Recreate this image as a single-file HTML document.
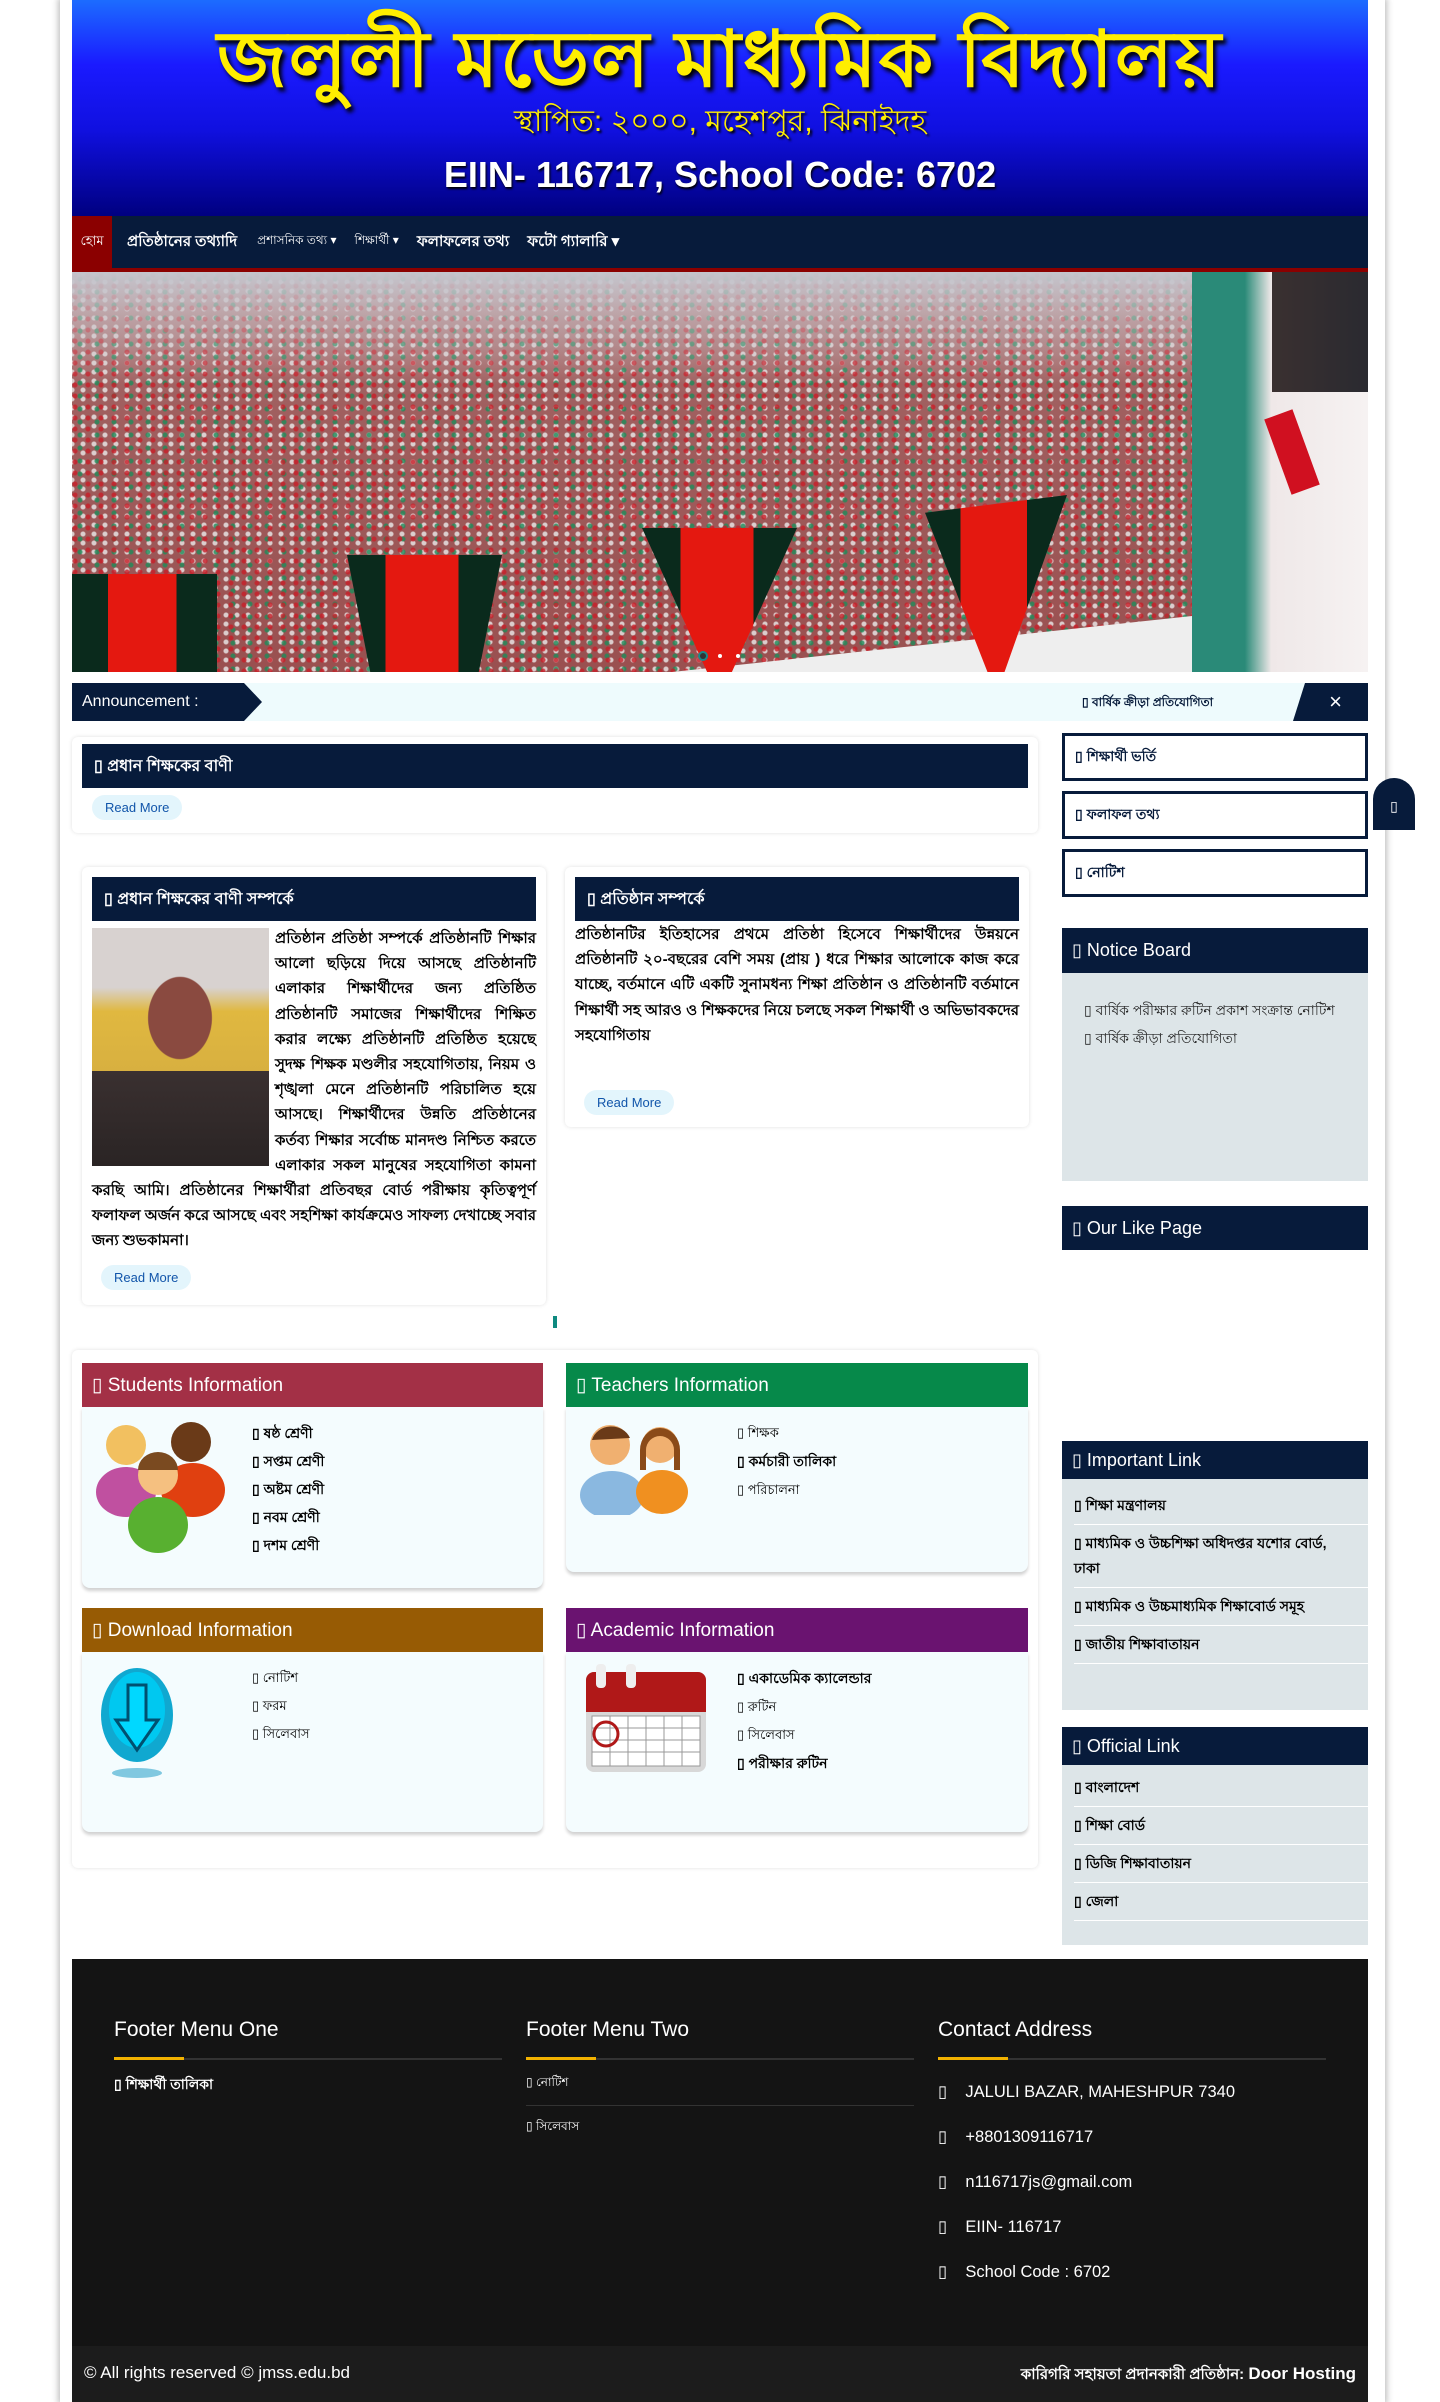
<!DOCTYPE html>
<html><head><meta charset="utf-8">
<style>
*{box-sizing:border-box;margin:0;padding:0}
body{width:1440px;height:2402px;background:#fff;font-family:"Liberation Sans",sans-serif;position:relative;overflow:hidden;color:#000}
.a{position:absolute}
.wrap{left:60px;top:0;width:1325px;height:2402px;box-shadow:0 0 6px 2px rgba(0,0,0,.25);background:#fff}
.navy{background:#071b3b;color:#fff}
.hd{font-size:16px;font-weight:bold;padding-left:12px;display:flex;align-items:center}
.rm{background:#e3f5fc;color:#1155aa;font-size:13px;border-radius:14px;padding:5px 13px;display:inline-block}
.card{background:#fff;border-radius:6px;box-shadow:0 0 4px rgba(0,0,0,.12)}
.sbtn{border:3px solid #071b3b;color:#071b3b;font-size:14px;font-weight:bold;padding-left:10px;display:flex;align-items:center}
.ih{color:#fff;font-size:19px;padding-left:10px;display:flex;align-items:center}
.ib{background:#f4fcfe;border-radius:0 0 8px 8px;box-shadow:0 3px 3px rgba(0,0,0,.18)}
.li{font-size:14px;line-height:28px}
.sl{background:#dde5e8}
.sl div{border-bottom:1px solid #fff;margin-left:12px;font-size:14px;padding:6px 0;line-height:25px}
.ft{color:#fff;font-size:21px}
.fu{height:2px;background:#333}
.fu i{display:block;width:70px;height:3px;background:#f2b200;margin-top:-1px}
.fc{color:#fff;font-size:16px}
.ban{background:linear-gradient(90deg,#0a2a1c 0,#0a2a1c 25%,#e41810 25%,#e41810 72%,#0a2a1c 72%)}
</style></head><body>
<div class="a wrap"></div>
<div class="a" style="left:72px;top:0;width:1296px;height:216px;background:linear-gradient(#1c6cff 0%,#1a1aff 30%,#1010e0 60%,#000080 100%);overflow:hidden">
 <div class="a" style="left:0;top:14px;width:1296px;text-align:center;color:#ffee00;font-size:78px;line-height:90px;font-weight:bold;text-shadow:3px 4px 4px #000;letter-spacing:2px">জলুলী মডেল মাধ্যমিক বিদ্যালয়</div>
 <div class="a" style="left:0;top:102px;width:1296px;text-align:center;color:#ffee00;font-size:30px;line-height:40px;text-shadow:2px 2px 2px #000">স্থাপিত: ২০০০, মহেশপুর, ঝিনাইদহ</div>
 <div class="a" style="left:0;top:153px;width:1296px;text-align:center;color:#fff;font-size:36px;line-height:44px;font-weight:bold;text-shadow:1px 2px 2px #000">EIIN- 116717, School Code: 6702</div>
</div>
<div class="a navy" style="left:72px;top:216px;width:1296px;height:52px;font-size:15px;font-weight:bold;display:flex;align-items:center">
 <div style="background:#8b0000;width:40px;height:52px;display:flex;align-items:center;justify-content:center;font-weight:normal;font-size:13px">হোম</div>
 <span style="margin-left:15px">প্রতিষ্ঠানের তথ্যাদি</span>
 <span style="margin-left:20px;font-weight:normal;font-size:12px">প্রশাসনিক তথ্য ▾</span>
 <span style="margin-left:18px;font-weight:normal;font-size:12px">শিক্ষার্থী ▾</span>
 <span style="margin-left:18px">ফলাফলের তথ্য</span>
 <span style="margin-left:18px">ফটো গ্যালারি ▾</span>
</div>
<div class="a" style="left:72px;top:268px;width:1296px;height:4px;background:#8b0000"></div>
<div class="a" style="left:72px;top:272px;width:1296px;height:400px;overflow:hidden;background:
 radial-gradient(circle at 3px 3px,rgba(200,30,40,.8) 2px,transparent 3px) 0 0/13px 11px,
 radial-gradient(circle at 3px 3px,rgba(30,140,90,.8) 2px,transparent 3px) 5px 4px/17px 13px,
 radial-gradient(circle at 3px 3px,rgba(235,235,235,.8) 2px,transparent 3px) 8px 7px/11px 9px,
 linear-gradient(#b88 0,#a06060 30%,#9a5050 100%)">
 <div class="a" style="left:0;top:0;width:1120px;height:110px;background:linear-gradient(#c4c4cc 0,rgba(196,190,196,.6) 40%,rgba(180,160,170,0) 100%)"></div>
 <div class="a" style="left:1120px;top:0;width:176px;height:400px;background:linear-gradient(90deg,#2a8a78 0,#2a8a78 30%,#efe8e8 45%,#f6f2f2 100%)"></div>
 <div class="a" style="left:1200px;top:0;width:96px;height:120px;background:linear-gradient(90deg,#3a3030,#2a2a30)"></div>
 <div class="a" style="left:1205px;top:140px;width:30px;height:80px;background:#d01020;transform:rotate(-20deg)"></div>
 <div class="a" style="left:600px;top:330px;width:520px;height:70px;background:#eee;clip-path:polygon(0 100%,100% 20%,100% 100%)"></div>
 <div class="a ban" style="left:0;top:302px;width:145px;height:98px"></div>
 <div class="a ban" style="left:275px;top:283px;width:155px;height:117px;clip-path:polygon(0 0,100% 0,85% 100%,15% 100%)"></div>
 <div class="a ban" style="left:570px;top:256px;width:155px;height:144px;clip-path:polygon(0 0,100% 0,58% 100%,42% 100%)"></div>
 <div class="a ban" style="left:853px;top:223px;width:142px;height:177px;clip-path:polygon(0 10%,100% 0,56% 100%,44% 100%)"></div>
 <div class="a" style="left:628px;top:381px;width:6px;height:6px;border-radius:50%;background:#333;box-shadow:0 0 0 2px #1a8a8a"></div>
 <div class="a" style="left:646px;top:382px;width:4px;height:4px;border-radius:50%;background:#fff"></div>
 <div class="a" style="left:664px;top:382px;width:4px;height:4px;border-radius:50%;background:#fff"></div>
</div>
<div class="a" style="left:72px;top:683px;width:1296px;height:38px;background:#eefbfd"></div>
<div class="a navy" style="left:72px;top:683px;width:190px;height:38px;clip-path:polygon(0 0,172px 0,190px 19px,172px 38px,0 38px);font-size:16px;padding-left:10px;line-height:38px">Announcement :</div>
<div class="a" style="left:1082px;top:683px;line-height:38px;font-size:12px;font-weight:bold;color:#071b3b">▯ বার্ষিক ক্রীড়া প্রতিযোগিতা</div>
<div class="a navy" style="left:1293px;top:683px;width:75px;height:38px;clip-path:polygon(12px 0,100% 0,100% 100%,0 100%);text-align:center;line-height:38px;font-size:22px;padding-left:10px">×</div>
<div class="a card" style="left:72px;top:737px;width:966px;height:96px"></div>
<div class="a navy hd" style="left:82px;top:744px;width:946px;height:44px">▯ প্রধান শিক্ষকের বাণী</div>
<div class="a rm" style="left:92px;top:795px">Read More</div>
<div class="a card" style="left:82px;top:867px;width:464px;height:438px"></div>
<div class="a navy hd" style="left:92px;top:877px;width:444px;height:44px">▯ প্রধান শিক্ষকের বাণী সম্পর্কে</div>
<div class="a" style="left:92px;top:928px;width:177px;height:238px;background:radial-gradient(ellipse 45px 58px at 88px 90px,#8a4a40 70%,transparent 72%),linear-gradient(#d8d2d0 0,#d8d2d0 25%,#e0b840 35%,#d8b040 60%,#3a3030 60%,#2a2424 100%)"></div>
<div class="a" style="left:92px;top:926px;width:444px;font-size:15px;line-height:25.2px;text-align:justify;font-weight:bold">
<div style="float:left;width:183px;height:240px"></div>
প্রতিষ্ঠান প্রতিষ্ঠা সম্পর্কে প্রতিষ্ঠানটি শিক্ষার আলো ছড়িয়ে দিয়ে আসছে প্রতিষ্ঠানটি এলাকার শিক্ষার্থীদের জন্য প্রতিষ্ঠিত প্রতিষ্ঠানটি সমাজের শিক্ষার্থীদের শিক্ষিত করার লক্ষ্যে প্রতিষ্ঠানটি প্রতিষ্ঠিত হয়েছে সুদক্ষ শিক্ষক মণ্ডলীর সহযোগিতায়, নিয়ম ও শৃঙ্খলা মেনে প্রতিষ্ঠানটি পরিচালিত হয়ে আসছে। শিক্ষার্থীদের উন্নতি প্রতিষ্ঠানের কর্তব্য শিক্ষার সর্বোচ্চ মানদণ্ড নিশ্চিত করতে এলাকার সকল মানুষের সহযোগিতা কামনা করছি আমি। প্রতিষ্ঠানের শিক্ষার্থীরা প্রতিবছর বোর্ড পরীক্ষায় কৃতিত্বপূর্ণ ফলাফল অর্জন করে আসছে এবং সহশিক্ষা কার্যক্রমেও সাফল্য দেখাচ্ছে সবার জন্য শুভকামনা।
</div>
<div class="a rm" style="left:101px;top:1265px">Read More</div>
<div class="a card" style="left:565px;top:867px;width:464px;height:260px"></div>
<div class="a navy hd" style="left:575px;top:877px;width:444px;height:44px">▯ প্রতিষ্ঠান সম্পর্কে</div>
<div class="a" style="left:575px;top:922px;width:444px;font-size:15px;line-height:25.2px;text-align:justify;font-weight:bold">প্রতিষ্ঠানটির ইতিহাসের প্রথমে প্রতিষ্ঠা হিসেবে শিক্ষার্থীদের উন্নয়নে প্রতিষ্ঠানটি ২০-বছরের বেশি সময় (প্রায় ) ধরে শিক্ষার আলোকে কাজ করে যাচ্ছে, বর্তমানে এটি একটি সুনামধন্য শিক্ষা প্রতিষ্ঠান ও প্রতিষ্ঠানটি বর্তমানে শিক্ষার্থী সহ আরও ও শিক্ষকদের নিয়ে চলছে সকল শিক্ষার্থী ও অভিভাবকদের সহযোগিতায়</div>
<div class="a rm" style="left:584px;top:1090px">Read More</div>
<div class="a" style="left:553px;top:1316px;width:4px;height:12px;background:#0e8a80"></div>
<div class="a sbtn" style="left:1062px;top:733px;width:306px;height:48px">▯ শিক্ষার্থী ভর্তি</div>
<div class="a sbtn" style="left:1062px;top:791px;width:306px;height:48px">▯ ফলাফল তথ্য</div>
<div class="a sbtn" style="left:1062px;top:849px;width:306px;height:48px">▯ নোটিশ</div>
<div class="a navy" style="left:1373px;top:778px;width:42px;height:52px;border-radius:21px 21px 0 0;text-align:center;line-height:56px;font-size:14px">▯</div>
<div class="a navy" style="left:1062px;top:928px;width:306px;height:45px;font-size:18px;padding-left:10px;line-height:45px">▯ Notice Board</div>
<div class="a sl" style="left:1062px;top:973px;width:306px;height:208px;padding:26px 0 0 22px;color:#222">
<div style="border:0;margin:0;padding:0;font-size:14px;line-height:22px">▯ বার্ষিক পরীক্ষার রুটিন প্রকাশ সংক্রান্ত নোটিশ</div>
<div style="border:0;margin:6px 0 0;padding:0;font-size:14px;line-height:22px">▯ বার্ষিক ক্রীড়া প্রতিযোগিতা</div></div>
<div class="a navy" style="left:1062px;top:1206px;width:306px;height:44px;font-size:18px;padding-left:10px;line-height:44px">▯ Our Like Page</div>
<div class="a navy" style="left:1062px;top:1441px;width:306px;height:38px;font-size:18px;padding-left:10px;line-height:38px">▯ Important Link</div>
<div class="a sl" style="left:1062px;top:1479px;width:306px;height:231px;padding-top:8px;font-weight:bold">
<div style="padding-right:40px">▯ শিক্ষা মন্ত্রণালয়</div><div style="padding-right:40px">▯ মাধ্যমিক ও উচ্চশিক্ষা অধিদপ্তর যশোর বোর্ড, ঢাকা</div><div style="padding-right:40px">▯ মাধ্যমিক ও উচ্চমাধ্যমিক শিক্ষাবোর্ড সমূহ</div><div>▯ জাতীয় শিক্ষাবাতায়ন</div></div>
<div class="a navy" style="left:1062px;top:1727px;width:306px;height:38px;font-size:18px;padding-left:10px;line-height:38px">▯ Official Link</div>
<div class="a sl" style="left:1062px;top:1765px;width:306px;height:180px;padding-top:4px;font-weight:bold">
<div>▯ বাংলাদেশ</div><div>▯ শিক্ষা বোর্ড</div><div>▯ ডিজি শিক্ষাবাতায়ন</div><div>▯ জেলা</div></div>
<div class="a card" style="left:72px;top:1350px;width:966px;height:518px"></div>
<div class="a ib" style="left:82px;top:1407px;width:461px;height:181px"></div>
<div class="a ih" style="left:82px;top:1363px;width:461px;height:44px;background:#a33046">▯ Students Information</div>
<svg class="a" style="left:96px;top:1420px" width="135" height="135" viewBox="0 0 135 135"><circle cx="30" cy="25" r="20" fill="#f2c060"/><ellipse cx="30" cy="72" rx="30" ry="25" fill="#c050a0"/><circle cx="95" cy="22" r="20" fill="#6a3a18"/><ellipse cx="97" cy="70" rx="32" ry="27" fill="#e04010"/><circle cx="62" cy="55" r="20" fill="#f5c080"/><path d="M42 50a20 18 0 0 1 40 0z" fill="#7a4a20"/><ellipse cx="62" cy="105" rx="30" ry="28" fill="#58b030"/></svg>
<div class="a li" style="left:252px;top:1419px;font-weight:bold">▯ ষষ্ঠ শ্রেণী<br>▯ সপ্তম শ্রেণী<br>▯ অষ্টম শ্রেণী<br>▯ নবম শ্রেণী<br>▯ দশম শ্রেণী</div>
<div class="a ib" style="left:566px;top:1407px;width:462px;height:165px"></div>
<div class="a ih" style="left:566px;top:1363px;width:462px;height:44px;background:#06894a">▯ Teachers Information</div>
<svg class="a" style="left:580px;top:1420px" width="120" height="95" viewBox="0 0 120 95"><circle cx="30" cy="25" r="20" fill="#f0b070"/><path d="M12 20a20 18 0 0 1 38 -2z" fill="#6a3a18"/><ellipse cx="32" cy="75" rx="32" ry="24" fill="#8ab8e0"/><circle cx="80" cy="25" r="18" fill="#f0b070"/><path d="M60 30a20 22 0 0 1 40 0v20h-6v-20a14 14 0 0 0-28 0v20h-6z" fill="#8a4a18"/><ellipse cx="82" cy="72" rx="26" ry="22" fill="#f09020"/></svg>
<div class="a li" style="left:737px;top:1419px;font-size:13px"><span>▯ শিক্ষক</span><br><b style="font-size:14px">▯ কর্মচারী তালিকা</b><br>▯ পরিচালনা</div>
<div class="a ib" style="left:82px;top:1652px;width:461px;height:180px"></div>
<div class="a ih" style="left:82px;top:1608px;width:461px;height:44px;background:#975b04">▯ Download Information</div>
<svg class="a" style="left:100px;top:1665px" width="75" height="115" viewBox="0 0 75 115"><ellipse cx="37" cy="50" rx="36" ry="47" fill="#10a8d0"/><ellipse cx="37" cy="45" rx="28" ry="38" fill="#00c8f0"/><path d="M28 20h18v35h12l-21 30-21-30h12z" fill="#00d8ff" stroke="#005070" stroke-width="3"/><ellipse cx="37" cy="108" rx="25" ry="5" fill="#80c8e0"/></svg>
<div class="a li" style="left:252px;top:1664px;font-size:13px">▯ নোটিশ<br>▯ ফরম<br>▯ সিলেবাস</div>
<div class="a ib" style="left:566px;top:1652px;width:462px;height:180px"></div>
<div class="a ih" style="left:566px;top:1608px;width:462px;height:44px;background:#6a1370">▯ Academic Information</div>
<svg class="a" style="left:584px;top:1664px" width="125" height="110" viewBox="0 0 125 110"><rect x="2" y="8" width="120" height="100" rx="8" fill="#d8d8d8"/><path d="M2 16a8 8 0 0 1 8-8h104a8 8 0 0 1 8 8v32H2z" fill="#b01818"/><rect x="12" y="0" width="10" height="24" rx="4" fill="#eee"/><rect x="42" y="0" width="10" height="24" rx="4" fill="#eee"/><rect x="8" y="52" width="108" height="50" fill="#fff" stroke="#999"/><path d="M26 52v50M44 52v50M62 52v50M80 52v50M98 52v50M8 64h108M8 76h108M8 88h108" stroke="#999"/><circle cx="22" cy="70" r="12" fill="none" stroke="#b01818" stroke-width="3"/></svg>
<div class="a li" style="left:737px;top:1664px;font-size:13px"><b style="font-size:14px">▯ একাডেমিক ক্যালেন্ডার</b><br>▯ রুটিন<br>▯ সিলেবাস<br><b style="font-size:14px">▯ পরীক্ষার রুটিন</b></div>
<div class="a" style="left:72px;top:1959px;width:1296px;height:443px;background:#141414"></div>
<div class="a ft" style="left:114px;top:2018px">Footer Menu One</div>
<div class="a ft" style="left:526px;top:2018px">Footer Menu Two</div>
<div class="a ft" style="left:938px;top:2018px">Contact Address</div>
<div class="a fu" style="left:114px;top:2058px;width:388px"><i></i></div>
<div class="a fu" style="left:526px;top:2058px;width:388px"><i></i></div>
<div class="a fu" style="left:938px;top:2058px;width:388px"><i></i></div>
<div class="a" style="left:114px;top:2073px;color:#fff;font-size:14px;font-weight:bold">▯ শিক্ষার্থী তালিকা</div>
<div class="a" style="left:526px;top:2074px;color:#fff;font-size:12px">▯ নোটিশ</div>
<div class="a" style="left:526px;top:2105px;width:388px;height:1px;background:#333"></div>
<div class="a" style="left:526px;top:2118px;color:#fff;font-size:12px">▯ সিলেবাস</div>
<div class="a fc" style="left:938px;top:2070px;line-height:45px;font-size:16.5px">
<div>▯ &nbsp;&nbsp;&nbsp;JALULI BAZAR, MAHESHPUR 7340</div>
<div>▯ &nbsp;&nbsp;&nbsp;+8801309116717</div>
<div>▯ &nbsp;&nbsp;&nbsp;n116717js@gmail.com</div>
<div>▯ &nbsp;&nbsp;&nbsp;EIIN- 116717</div>
<div>▯ &nbsp;&nbsp;&nbsp;School Code : 6702</div></div>
<div class="a" style="left:72px;top:2346px;width:1296px;height:56px;background:#1c1c1c"></div>
<div class="a" style="left:84px;top:2363px;color:#fff;font-size:17px">© All rights reserved © jmss.edu.bd</div>
<div class="a" style="right:84px;top:2363px;color:#fff;font-size:15px;font-weight:bold">কারিগরি সহায়তা প্রদানকারী প্রতিষ্ঠান: <span style="font-size:17px">Door Hosting</span></div>
</body></html>
